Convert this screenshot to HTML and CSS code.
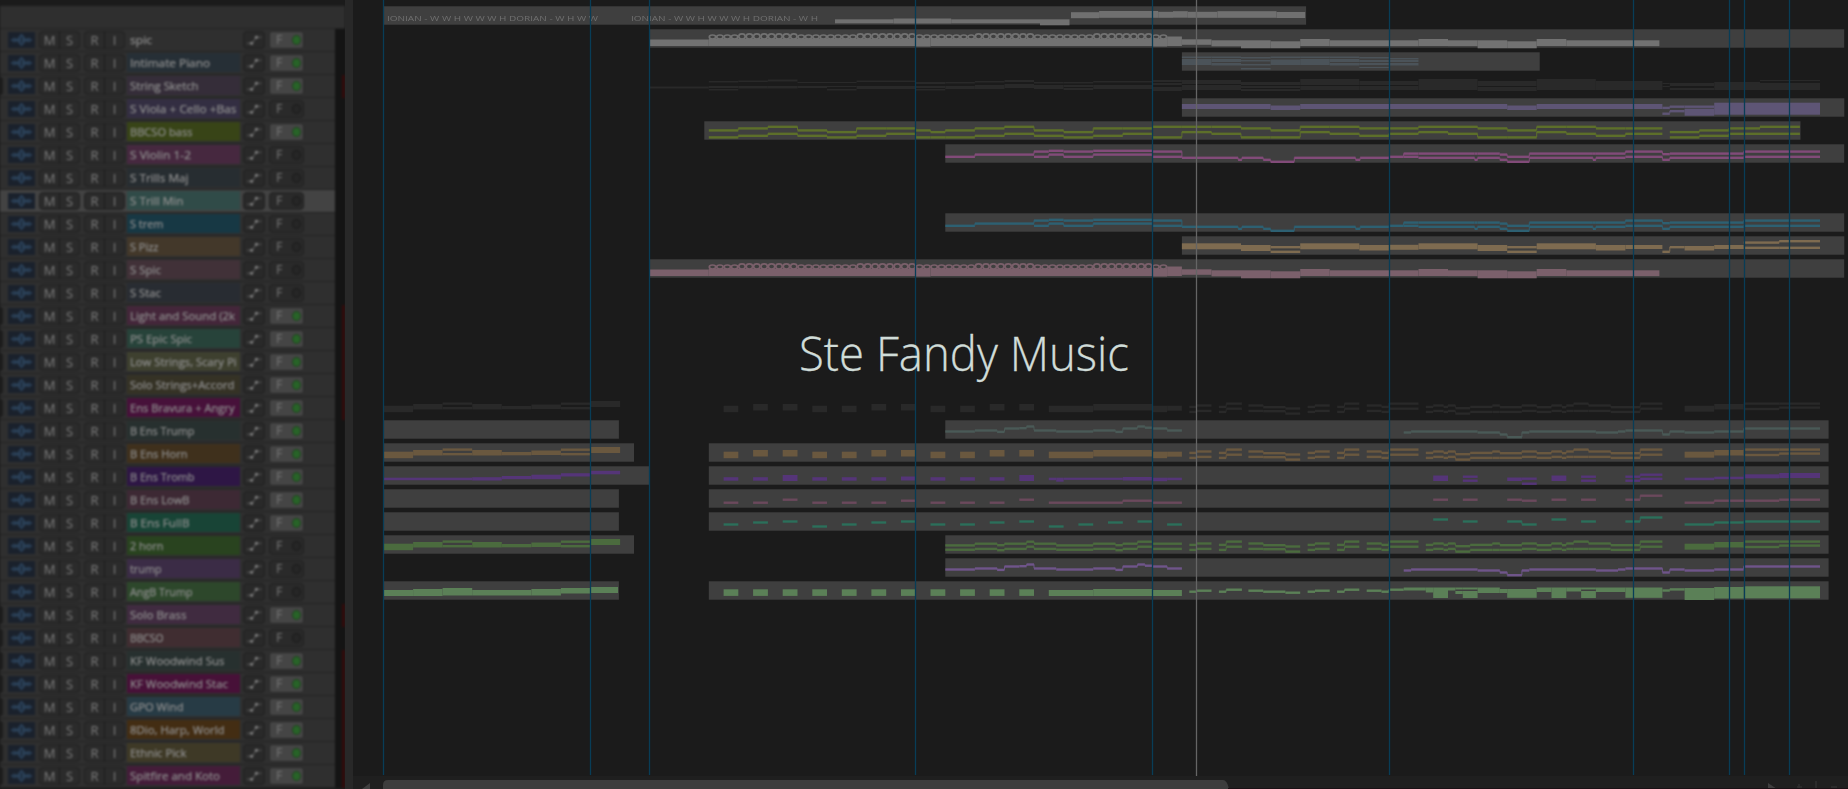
FILE: index.html
```html
<!DOCTYPE html>
<html lang="en">
<head>
<meta charset="utf-8">
<title>Ste Fandy Music</title>
<link rel="stylesheet" href="styles.css">
</head>
<body>
<svg class="defs" width="0" height="0">
  <symbol id="wave" viewBox="0 0 27 16">
    <path d="M3 8h21M6 5.5v5M8.500 6v4M11 4.500v7M16 4.500v7M18.500 6v4M21 5.500v5" fill="none" stroke="#2e4760" stroke-width="1.300"/>
    <ellipse cx="13.500" cy="8" rx="1.600" ry="5" fill="#1b2533" stroke="#304a65" stroke-width="1.300"/>
  </symbol>
  <symbol id="route" viewBox="0 0 20 17">
    <path d="M2.500 12H8M8 12L12.500 5.500M12.500 5.500H18" fill="none" stroke="#5c5c5c" stroke-width="1.100"/>
    <circle cx="7.500" cy="12" r="1.600" fill="#858585"/><circle cx="12.500" cy="5.500" r="1.600" fill="#858585"/>
  </symbol>
</svg>
<main class="daw">
  <aside class="panel">
    <div class="panel-top"></div>
    <div class="panel-head"></div>
    <div class="tracks" id="tracks"></div>
  </aside>
  <div class="splitter"></div>
  <section class="arrange">
    <div class="lanes" id="lanes"></div>
    <div class="scroll">
      <svg width="1495" height="13" viewBox="353 776 1495 13">
        <path d="M383 789V785q0-5 5-5H1223q4 0 6 9Z" fill="#3d3d3d"/>
        <path d="M370 783v6h-8Z" fill="#3f3f3f"/>
        <path d="M1768 783v6h9Z" fill="#3f3f3f"/>
        <path d="M1799 784v5M1797 787h5M1816 781v8M1831 787h6" stroke="#303030" stroke-width="1.500"/>
        <path d="M1228 788.500H1848" stroke="#1a1015"/>
      </svg>
    </div>
    <svg class="markers" id="markers" width="1495" height="776" viewBox="353 0 1495 776"></svg>
  </section>
</main>
<svg class="title" width="340" height="70" viewBox="0 0 340 70">
  <text x="3" y="51" textLength="330" lengthAdjust="spacingAndGlyphs">Ste Fandy Music</text>
</svg>
<script src="app.js"></script>
</body>
</html>
```
FILE: styles.css
```css
body { margin: 0; background: #1b1b1b; overflow: hidden; position: relative; width: 1848px; height: 789px; font-family: "Open Sans", "Noto Sans", sans-serif; }
.defs { position: absolute; }
.daw { display: flex; width: 1848px; height: 789px; overflow: hidden; }
.panel { width: 345px; height: 789px; flex: none; background: #202020; filter: blur(.95px); }
.panel-top { height: 6px; background: #1b1b1b; }
.panel-head { height: 22px; background: #2f2f2f; }
.splitter { width: 8px; flex: none; background: #282828; filter: blur(.6px); }

.track { display: flex; align-items: center; height: 23px; box-sizing: border-box; border-top: 1.500px solid #222; background: #2f2f2f; padding-bottom: 1px; }
.track.selected { background: #434343; }
.edge { width: 3px; height: 18px; border-radius: 0 3px 3px 0; margin-right: 5px; }
.edge.on { background: #1d1d1d; }
.wave { width: 27px; height: 16px; background: #1a212c; margin-right: 4px; flex: none; }
.pair { display: flex; width: 41px; height: 18px; box-sizing: border-box; border: 1.500px solid #202020; border-radius: 4px; background: #2b2b2b; margin-right: 4px; flex: none; color: #7d7d7d; font-size: 13px; font-weight: 500; line-height: 16px; text-align: center; }
.pair span { flex: 1; }
.pair span + span { border-left: 1px solid #1c1c1c; }
.pair + .pair { margin-right: 2px; }
.name { width: 113px; height: 19px; flex: none; margin-right: 3px; }
.name text { font-size: 11.300px; fill: #8e8e8e; stroke: #8e8e8e; stroke-width: .25px; }
.route { width: 22px; height: 18px; box-sizing: border-box; border: 1.500px solid #202020; border-radius: 4px; background: #292929; margin-right: 4px; flex: none; }
.fx { display: flex; align-items: center; justify-content: space-between; width: 35px; height: 18px; box-sizing: border-box; border: 1.500px solid #202020; border-radius: 4px; background: #2a2a2a; padding: 0 2px 0 6px; color: #757575; font-size: 12.500px; font-weight: 500; line-height: 15px; flex: none; }
.fx.on { background: #454545; border-color: #292929; border-radius: 3px; }
.led { width: 7px; height: 8px; border: 1px solid #1a1a1a; border-radius: 50%; background: #262626; }
.fx.on .led { background: #286328; border-color: #1f421f; }
.meter { width: 10px; height: 23px; margin: 0 0 -1px auto; background: #141414; flex: none; box-sizing: border-box; }
.meter.clip { border-right: 3px solid #330a0a; }

.arrange { position: relative; flex: 1; display: flex; flex-direction: column; height: 789px; background: #1b1b1b; }
.lanes { height: 776px; padding-top: 5px; box-sizing: border-box; filter: blur(.75px); }
.lane { display: block; height: 23px; overflow: visible; }
.lane text { font-size: 8px; fill: #707070; }
.scroll { height: 13px; background: #1f1f1f; filter: blur(.6px); }
.scroll svg { display: block; }
.markers { position: absolute; left: 0; top: 0; filter: blur(.35px); }
.title { position: absolute; left: 796px; top: 320px; overflow: visible; }
.title text { font-family: "Open Sans", "Noto Sans", sans-serif; font-weight: 300; font-size: 47px; fill: #d0dcd8; stroke: #d0dcd8; stroke-width: .3px; }
```
FILE: app.js
```js
// name, text width, colour, fx enabled, folder edge, meter clip
const tracks = [
  ["spic", 22, "#2f2f2f", 1, 0, 0],
  ["Intimate Piano", 80, "#262f36", 1, 0, 0],
  ["String Sketch", 68.5, "#352d39", 1, 1, 1],
  ["S Viola + Cello +Bas", 106.5, "#332e42", 0, 0, 0],
  ["BBCSO bass", 62.5, "#384417", 1, 0, 0],
  ["S Violin 1-2", 61, "#46283f", 0, 0, 0],
  ["S Trills Maj", 58.5, "#272d31", 0, 0, 0],
  ["S Trill Min", 53.500, "#304b48", 0, 0, 0],
  ["S trem", 33.500, "#173844", 0, 0, 0],
  ["S Pizz", 28.500, "#43382a", 0, 0, 0],
  ["S Spic", 31, "#413138", 0, 0, 0],
  ["S Stac", 31, "#282c32", 0, 0, 0],
  ["Light and Sound (2k", 105, "#44263a", 1, 1, 1],
  ["PS Epic Spic", 62, "#27433a", 1, 1, 1],
  ["Low Strings, Scary Pi", 106.5, "#3e402f", 1, 1, 1],
  ["Solo Strings+Accord", 104.5, "#353225", 1, 1, 1],
  ["Ens Bravura + Angry", 104.5, "#47113a", 1, 1, 1],
  ["B Ens Trump", 64.5, "#27302f", 1, 0, 0],
  ["B Ens Horn", 57.500, "#3f301c", 1, 0, 0],
  ["B Ens Tromb", 64.5, "#2e1645", 1, 0, 0],
  ["B Ens LowB", 59.5, "#3d2934", 1, 0, 0],
  ["B Ens FullB", 59.5, "#184436", 1, 0, 0],
  ["2 horn", 33.5, "#29431f", 0, 0, 0],
  ["trump", 31.5, "#3b2c46", 0, 0, 0],
  ["AngB Trump", 62.5, "#2d472b", 0, 0, 0],
  ["Solo Brass", 56.5, "#402b40", 1, 1, 1],
  ["BBCSO", 33.5, "#402d31", 0, 1, 0],
  ["KF Woodwind Sus", 94.5, "#27302f", 1, 1, 1],
  ["KF Woodwind Stac", 98, "#471138", 1, 1, 1],
  ["GPO Wind", 53.500, "#273b45", 1, 1, 1],
  ["8Dio, Harp, World", 94.5, "#432d13", 1, 1, 1],
  ["Ethnic Pick", 56.5, "#3e3926", 1, 1, 1],
  ["Spitfire and Koto", 90, "#441c39", 1, 1, 1]
];

document.getElementById("tracks").innerHTML = tracks.map(([name, w, color, fx, edge, clip], i) => `
<div class="track${i === 7 ? " selected" : ""}">
  <div class="edge${edge ? " on" : ""}"></div>
  <svg class="wave"><use href="#wave"/></svg>
  <div class="pair"><span>M</span><span>S</span></div>
  <div class="pair"><span>R</span><span>I</span></div>
  <svg class="name" style="background:${color}"><text x="3" y="13.500" textLength="${w}" lengthAdjust="spacingAndGlyphs">${name}</text></svg>
  <svg class="route"><use href="#route"/></svg>
  <div class="fx${fx ? " on" : ""}"><span>F</span><i class="led"></i></div>
  <div class="meter${clip ? " clip" : ""}"></div>
</div>`).join("");

// Notes are "bar:y,y+height"; an entry lasts until the next one, an empty entry is a rest.
const END = 48.58, LEFT = 383.5, BAR = 29.57;
const X = bar => (LEFT + bar * BAR).toFixed(1);

const spic = "9:11.5+6.5 11:10.8+7.2 18:11+7.5 18.5:10.8+7.2 26:11+7.5 26.5:8.5+9.5 27:11.3+5.5 28:12.3+6 29:12.3+8 30:13.3+7 31:11+7 32:12.3+5.8 35:11+7 36:12.3+5.8 37:12.3+8 38:13.3+7 39:11+7 40:12.3+5.8 43.15:";
const violin = "19:12.6 20:10.4 22:7.4,12.6 22.5:6.6,10.4 23:7.4,12.6 24:6.6,10.4 26:7.4,12.6 27:13.6 28.9:15.6 29.03:13.6 29.75:15.6 30:17.6 30.8:13.6 32.87:15.6 33.03:13.6 34:12.6 34.5:9.4,12.6 35:9.4,13.6 36.9:9.4,15.6 37:9.4,13.6 37.75:10.4,15.6 38:12.6,17.6 38.75:9.4,13.6 40.9:9.4,15.6 41:9.4,13.6 42:7.4,12.6 43.25:10,15.6 43.5:9.4,13.6 46:7.4,12.6 " + END + ":";
const hornIn = "0:9.7+6.5 1:8+5.5 2:6.4,11 3:8+5.5 4:10+3.3 5:8.5+4.5 6:6.5,11 7:5+6 8: ";
const hornMid = "11.5:9.7+6.5 12: 12.5:8+6.5 13: 13.5:8+6.5 14: 14.5:9.7+6.5 15: 15.5:9.7+6.5 16: 16.5:8+6.5 17: 17.5:8+6.5 18: 18.5:9.7+6.5 19: 19.5:9.7+6.5 20: 20.5:8+6.5 21: 21.5:8+6.5 22: 22.5:9.7+6.5 24:8+6.5 26:9.7+6.5 26.5:9.7+5 27: ";
const hornOut = "27.25:9.7,14.7 27.5:8.3,13.7 28: 28.25:9.7,14.7 28.5:6.4,11.5 29.03: 29.25:8.3,13.7 29.75:10,14 30.5:11.3,16.4 31: 31.25:9.7,14.7 31.5:8.3,13.7 32: 32.25:9.7,14.7 32.5:6.4,11.5 33: 33.25:8.3,13.7 33.75:9.7,14.7 34:6.4,11.5 35: 35.25:9.7,14.7 35.5:8.3,13.7 35.85:9.7,14.7 36:8.3,13.7 36.25:11,16.4 36.75:9.7,14.7 37.5:8.3,14.7 37.75:10,14.7 38.5:8.3,13.7 39:10,14.7 39.5:8.3,13.7 39.85:10,14.7 40:8.3,13.7 40.25:6.4,13.7 40.75:8.3,13.7 41.5:10,14.7 42.5:6.4,11.5 43.25: 44:9.7+6 45:8+5.5 46:6.4,11.8 47.2:6.4,10.4 " + END + ":";
const horn2 = "19:10.2,14.5 20:8.5,13.7 20.75:10,15 21:8.5,13.7 21.75:6.5,11.5 22:8.5,13.7 22.75:10.2,14.5 24:8.5,13.7 24.75:10,15 25:8.5,13.7 25.5:6.5,11.5 26:8.5,13.7 27: ";
const trump = "19:11.3 20:10.3 20.75:11.7 21:8.3 21.5:8 21.75:6.3 22:10.3 22.75:11.3 24:10.3 24.75:11.7 25:8.3 25.5:6.3 25.75:7.5 26:8.3 26.5:10.3 27: 34.5:12.3 34.75:11.3 37:12.3 37.75:14.3 38:17 38.5:12.3 38.75:11.3 41:12.3 41.75:11.3 42:10.3 43.25:14.3 43.5:11.3 44:12.3 45:11.3 46:8.3 " + END + ":";

const lanes = {
  "-1": { clips: [[0, 31.2]], color: "#707070", labels: [[387, 211, "IONIAN - W W H W W W H DORIAN - W H W W"], [631, 187, "IONIAN - W W H W W W H DORIAN - W H"]],
    notes: "15.27:14.3+4 17.25:13.5+5 19.2:14.3+4 22.2:14.3+6 23.2: 23.25:7.2+6 24.2:6+6.8 26.2:6.8+6 26.7:6.2+6.500 27.2:6.8+6 28.2:6.2+6.600 30.2:7+6 31.17:" },
  0: { clips: [[9, 49.4]], color: "#727272", notes: spic, beads: 1 },
  1: { clips: [[27, 39.1]], color: "#4b5359", notes: "27:5.500+1.500,8+6 28:5.500+1.500,8+3,12+2.500 29:6+1.500,9+1.500,13+1.500,17+1.500 30:5.500+1.500,8.500+5.500 31:5.500+1.500,8+6 32:5.500+1.500,8+3,12+2.500 33:6+1.500,9+2,12+2,16+1 34:7+1.500,9+2,12+2.500 35:" },
  2: { clips: [], color: "#292929", notes: "9:12.500+2 11:7+1.500,12+2,15+1.500 12:6.500+1.500,12+2.500 13:5.500+2,12+2.500 14:8+1,12+2 15:8+1,12+1,15+1.500 16:6.500+1.500,12+3 18:8+2,12+2,15+1.500 19:8+1.500,12+3 20:7+1.500,11+4 21:6+2,10+4 22:8+1.500,11+4 23:8+1.500,11+2,14+2 24:7+1.500,11+4 26:6+2,9+2,13+4 27:6+4,11+5 29:8+3,12+2,15+2 31:5+6,12+4 33:7+4,12+4 35:5+11 37:7+5,13+4 39:5+11 41:7+9 43.25:9+1,12+1 43.5:9+3,14+2 45:8+8 46.55:6+1,9+7 48.58:" },
  3: { clips: [[27, 49.4]], color: "#5e5575", notes: "27:7+5 30:8.5+4.5 31:7+5 38:8.5+4.5 39:7+5 43.25:9.7,15.5 43.5:8.5,13 44:8.5,11.7+7 45:5.7+12 " + END + ":" },
  4: { clips: [[10.85, 47.92]], color: "#5d6f2a", notes: "11:9.2,16.2 12:7.2,14.6 13:5.6,12.6 14:9.2,14.6 15:10.9,16.2 16:7.2,14.6 17:7.2,12.6 18:9.2,16.2 18.5:10.9,16.2 19:9.2,16.2 20:7.2,14.6 21:5.6,12.6 22:9.2,14.6 23:10.9,16.2 24:7.2,14.6 25:7.2,12.6 26:5.6,16.2 27:5.6,10.9 28:5.6,12.6 29:7.2,16.2 30:9.2,16.2 31:5.6,10.9 32:5.6,12.6 33:7.2,14.6 34:7.2,12.6 35:5.6,10.9 36:5.6,12.6 37:7.2,16.2 38:9.2,16.2 39:5.6,10.9 40:5.6,12.6 41:7.2,14.6 42:7.2,12.6 43.25: 43.5:10.9,16.2 44.5:9.2,14.6 45.5:7.2,12.6 46.55:5.6,12.6 47.9:" },
  5: { clips: [[19, 49.4]], color: "#824b79", notes: violin },
  8: { clips: [[19, 49.4]], color: "#2d6072", notes: violin },
  9: { clips: [[27, 49.4]], color: "#7e6b50", notes: "27:8.3+6 29:10+6 30:11,15.6 31:8.3+6 33:10+5.5 34:9.8+5 35:8.3+6 37:10+6 38:11,15.6 39:8.3+6 41:10+5.5 42:10+4 43.25:15.6 43.5:11 44:11+4.5 45:10+4 46:6.4,11.6 47.2:5,11.6 " + END + ":" },
  10: { clips: [[9, 49.4]], color: "#7b606b", notes: spic, beads: 1 },
  16: { clips: [], color: "#292929", notes: hornIn + hornMid + hornOut },
  17: { clips: [[0, 7.96], [19, 48.87]], color: "#4a5a57", notes: trump },
  18: { clips: [[0, 8.47], [11, 48.87]], color: "#6a583f", notes: hornIn + hornMid + hornOut },
  19: { clips: [[0, 9], [11, 48.87]], color: "#553578", notes: "0:12.7+2.5 3:12.2+3.3 4:11+3.2 5:9.7+4.500 6:8.2+3.3 7:5.8+3.5 8: 11.5:12.2+3.500 12: 12.5:12.2+3.500 13: 13.5:10+6 14: 14.5:12.2+3.500 15: 15.5:12.2+3.500 16: 16.5:12.2+3.500 17: 17.5:11.5+4 18: 18.5:12.2+3.500 19: 19.5:12.2+3.500 20: 20.5:12.2+3.500 21: 21.5:10+6 22: 22.5:12.7+2.500 22.75:12.7+4 23:12.7+2.200 25:12+3.5 26:12.7+3.5 26.5:12.7+2.5 27: 35.5:10.5+5.5 36: 36.5:10.5,14.5 37: 38:12.5+3.500 38.5:12.5,17.500 39: 39.5:10.5+5.5 40: 40.5:10.5,14.5 41: 42:10.5,14.5 42.5:8.5,12.7 43.25: 44:12.7+2.5 45:11.7+2.500 46:9.3+4 47.2:8+5 " + END + ":" },
  20: { clips: [[0, 7.96], [11, 48.87]], color: "#6b495c", notes: "11.5:13.5 12: 12.5:13.5 13: 13.5:10.500 14: 14.5:13.5 15: 15.5:13.5 16: 16.5:13.5 17: 17.5:11.500 18: 18.5:13.5 19: 19.5:13.5 20: 20.5:13.5 21: 21.5:10.500 22: 22.5:13.5 25:11.500 26:13.5 27: 35.5:10.500 36: 36.5:10.500 37: 38:10.500 38.5:11.500 39: 39.5:10.500 40: 40.5:10.500 41: 42:10.500 42.5:6.5 43.25: 44:13.5 45:11.500 47.2:10.500 " + END + ":" },
  21: { clips: [[0, 7.96], [11, 48.87]], color: "#2c6f5b", notes: "11.5:12.3 12: 12.5:10.3 13: 13.5:9.3 14: 14.5:14.3 15: 15.5:12.3 16: 16.5:10.3 17: 17.5:9.3 18: 18.5:12.3 19: 19.5:12.3 20: 20.5:10.3 21: 21.5:9.3 22: 22.5:14.3 23: 23.5:12.3 24: 24.5:10.3 25: 25.5:9.3 26: 26.5:12.3 27: 35.5:7.3 36: 36.5:9.3 37: 38:9.3 38.5:12.3 39: 39.5:7.3 40: 40.5:9.3 41: 42:9.3 42.5:5.3 43.25: 44:12.3 45:10.3 46:9.3 " + END + ":" },
  22: { clips: [[0, 8.47], [19, 48.87]], color: "#4b6b3e", notes: hornIn + horn2 + hornOut },
  23: { clips: [[19, 48.87]], color: "#6f558a", notes: trump },
  24: { clips: [[0, 7.96], [11, 48.87]], color: "#5b8057", notes: "0:10+6 1:9+7 2:8+7.5 3:10+5.500 5:9+6.5 6:8+5.500 7:7+6 7.93: " + [11.5, 12.5, 13.5, 14.5, 15.5, 16.5, 17.5, 18.5, 19.5, 20.5, 21.5].map(b => b + ":9.3+6.6 " + (b + .5) + ":").join(" ") + " 22.5:10+6 24:9+7 26:10+6 27: 27.25:10.500 27.5:9.500 28: 28.25:10.500 28.5:8.500 29.03: 29.25:9.500 29.75:10.500 30.5:11.500 31: 31.25:10.500 31.5:9.500 32: 32.25:10.500 32.5:8.500 33: 33.25:9.500 33.75:10.500 34:8.500 34.5:7.500+3 35.25:7.5+5 35.5:7.5+10.5 36:7.5+3 36.25:7.5+2,11+3 36.5:7.5+2,11+7 37:7.5+5.500 37.75:9+4 38:9+8.800 39:7.5+4.500 39.5:7.5+10.5 40:7.5+4 40.5:7.5+2,11+7 41:7.5+4.500 42:7.5+10.3 43.25:9.3 43.5:8.2 44:8+12 45:7+11.500 46:6.300+12 " + END + ":" }
};

function drawNotes(spec, color) {
  const steps = spec.trim().split(/\s+/).map(s => {
    const [bar, ys] = s.split(":");
    return { bar: +bar, notes: ys ? ys.split(",").map(n => n.split("+").map(Number)) : [] };
  });
  let out = "";
  steps.forEach((step, i) => {
    const next = steps[i + 1];
    if (!next) return;
    const x1 = X(step.bar), x2 = X(next.bar);
    step.notes.forEach(([y, h = 2.4], k) => {
      out += `<rect x="${x1}" y="${y}" width="${(x2 - x1).toFixed(1)}" height="${h}" fill="${color}"/>`;
      // Thin riser between two consecutive single-pitch notes.
      const to = next.notes[k];
      if (to && step.notes[k].length < 2 && to.length < 2 && Math.abs(to[0] - y) > 1)
        out += `<path d="M${x2} ${y + 1}V${to[0] + 1}" stroke="${color}" stroke-width="1"/>`;
    });
  });
  return out;
}

// Short alternating notes over bars 11 to 27, drawn as a chain of beads.
function drawBeads(color) {
  let out = "";
  for (let b = 11; b < 26.4; b += .25) {
    const x = +X(b) + 3.7;
    const low = b < 12 || (b >= 14 && b < 16) || (b >= 18 && b < 20) || (b >= 22 && b < 24) || b >= 26;
    out += `<ellipse cx="${x}" cy="${low ? 9 : 8.4}" rx="3.200" ry="${low ? 2 : 2.600}" fill="none" stroke="${color}" stroke-width="1.700"/>`;
  }
  return out;
}

let html = "";
for (let i = -1; i < 33; i++) {
  const lane = lanes[i] || { clips: [], notes: "" };
  html += `<svg class="lane" width="1495" height="23" viewBox="353 0 1495 23">`;
  lane.clips.forEach(([a, b]) => { html += `<rect x="${X(a)}" y="1.3" width="${((b - a) * BAR).toFixed(1)}" height="18.400" fill="#3f3f3f"/>`; });
  (lane.labels || []).forEach(([x, w, t]) => { html += `<text x="${x}" y="16.300" textLength="${w}" lengthAdjust="spacingAndGlyphs">${t}</text>`; });
  if (lane.notes) html += drawNotes(lane.notes, lane.color);
  if (lane.beads) html += drawBeads(lane.color);
  html += "</svg>";
}
document.getElementById("lanes").innerHTML = html;

document.getElementById("markers").innerHTML =
  [383.5, 590.5, 649.5, 915.5, 1152.5, 1389.5, 1633.5, 1729.5, 1744.5, 1789.5]
    .map(x => `<path d="M${x} 0V775" stroke="#083d57" stroke-width="1.300"/>`).join("") +
  `<path d="M1196.500 0V776" stroke="#656565" stroke-width="1.300"/>`;
```
